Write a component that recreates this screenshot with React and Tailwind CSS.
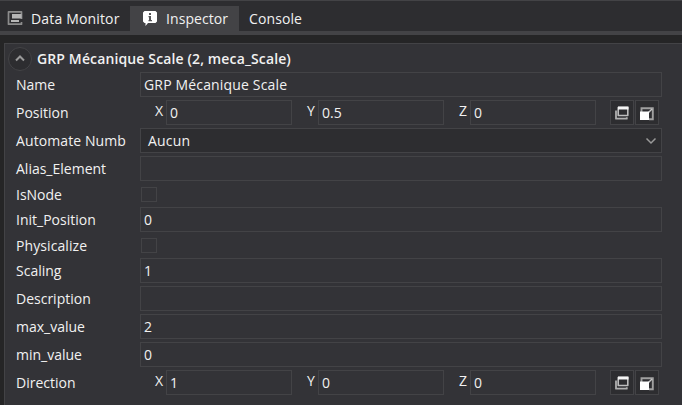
import React from "react";

const box = "h-[25px] border border-[#434346] bg-[#333337]";

function Field({ value }) {
  return (
    <div className={`${box} flex w-[522px] items-center pl-[3px]`}>
      <span className="tracking-[0.16px]">{value}</span>
    </div>
  );
}

function Axis({ name, value }) {
  return (
    <div className="ml-[15px] flex">
      <span className="w-[11px] leading-[22px]">{name}</span>
      <div className={`${box} flex w-[126px] items-center pl-[3px]`}>{value}</div>
    </div>
  );
}

function CopyIcon() {
  return (
    <svg width="16" height="16" viewBox="0 0 16 16" fill="none">
      <path d="M4.200 2.500h9.600v8H4.200z" stroke="#bdbdbd" strokeWidth="1.600" strokeLinejoin="round" />
      <path d="M4 1.500h10.500v3H4z" fill="#f5f5f5" />
      <path d="M2 5.500v8.200h10.800v-1.500" stroke="#b0b0b0" strokeWidth="1.800" strokeLinejoin="round" />
    </svg>
  );
}

function PasteIcon() {
  return (
    <svg width="16" height="16" viewBox="0 0 16 16" fill="none">
      <path d="M2.500 7V3.200h11.300v11H10" stroke="#a0a0a0" strokeWidth="1.900" />
      <path d="M9.500 7.500l3.500-3.500" stroke="#c8c8c8" strokeWidth="1.500" />
      <path d="M1 6.500h9V15H1z" fill="#ffffff" />
    </svg>
  );
}

function Vector({ values }) {
  return (
    <div className="flex">
      <Axis name="X" value={values[0]} />
      <Axis name="Y" value={values[1]} />
      <Axis name="Z" value={values[2]} />
      <div className="ml-[14px] flex gap-px">
        <button className="flex h-[25px] w-[24px] items-center justify-center border border-[#434346] bg-[#2d2d30]"><CopyIcon /></button>
        <button className="flex h-[25px] w-[24px] items-center justify-center border border-[#434346] bg-[#2d2d30] pt-px"><PasteIcon /></button>
      </div>
    </div>
  );
}

function Row({ label, tracking = "", short, children }) {
  return (
    <div className={`flex ${short ? "h-[23px]" : "h-[28px]"}`}>
      <div className={`w-[129px] shrink-0 overflow-hidden whitespace-nowrap pl-[11px] ${short ? "leading-[21px]" : "leading-[25px]"} ${tracking}`}>{label}</div>
      <div className="pl-[6px]">{children}</div>
    </div>
  );
}

function Check() {
  return <div className="ml-px mt-[3px] h-[15px] w-[16px] border border-[#434346]" />;
}

export default function App() {
  return (
    <div className="flex h-[405px] w-[682px] flex-col overflow-hidden bg-[#252526] font-['Open_Sans','Noto_Sans',sans-serif] text-[14px] text-[#f1f1f1]">
      <div className="flex h-[35px] shrink-0 items-start border-b-4 border-t border-[#434346] bg-[#2d2d30] leading-[25px]">
        <div className="mt-[5px] flex h-[25px] w-[130px] pl-[7px]">
          <svg className="mt-[4px]" width="16" height="16" viewBox="0 0 16 16" fill="none">
            <path d="M14.500 9V1.800h-13v12.400h13V12" stroke="#8c8c8c" strokeWidth="1.700" strokeLinejoin="round" />
            <path d="M5 4h9.500v4.500H5z" fill="#b4b4b4" />
            <path d="M4 11h8" stroke="#d0d0d0" strokeWidth="1.700" />
          </svg>
          <span className="ml-[8px] whitespace-nowrap tracking-[0.16px]">Data Monitor</span>
        </div>
        <div className="mt-[5px] flex h-[25px] w-[109px] bg-[#434346] pl-[12px]">
          <svg className="mt-[4px]" width="16" height="16" viewBox="0 0 16 16">
            <path d="M2.500 1h11L15 2.500v9L13.500 13H6l-2.500 3v-3h-1L1 11.500v-9z" fill="#ffffff" />
            <path d="M7 3h2v2H7zM6.500 6H9v4h1v1.300H6.500V10H7V7.300h-.5z" fill="#555557" />
          </svg>
          <span className="ml-[8px] tracking-[0.08px]">Inspector</span>
        </div>
        <span className="ml-[10px] mt-[5px] tracking-[0.1px]">Console</span>
      </div>

      <div className="ml-[4px] mt-[8px] flex grow flex-col border-l border-t border-[#434346] bg-[#333337]">
        <div className="flex h-[28px] items-center pl-[3px] pt-[1px]">
          <div className="flex h-[24px] w-[24px] items-center justify-center rounded-full border border-[#434346] bg-[#2d2d30]">
            <svg width="12" height="12" viewBox="0 0 12 12" fill="none">
              <path d="M2 7.500L6 3.500l4 4" stroke="#999999" strokeWidth="2" />
            </svg>
          </div>
          <span className="ml-[5px] font-semibold tracking-[0.13px]">GRP Mécanique Scale (2, meca_Scale)</span>
        </div>
        <Row label="Name"><Field value="GRP Mécanique Scale" /></Row>
        <Row label="Position"><Vector values={["0", "0.5", "0"]} /></Row>
        <Row label="Automate Numb" tracking="tracking-[0.1px]">
          <div className="flex h-[25px] w-[522px] items-center justify-between border border-[#434346] bg-[#2d2d30] pl-[7px] pr-[4px]">
            <span className="tracking-[0.2px]">Aucun</span>
            <svg width="12" height="12" viewBox="0 0 12 12" fill="none">
              <path d="M1.500 3.500L6 8l4.500-4.500" stroke="#999999" strokeWidth="1.500" />
            </svg>
          </div>
        </Row>
        <Row label="Alias_Element"><Field value="" /></Row>
        <Row label="IsNode" short><Check /></Row>
        <Row label="Init_Position"><Field value="0" /></Row>
        <Row label="Physicalize" tracking="tracking-[0.08px]" short><Check /></Row>
        <Row label="Scaling"><Field value="1" /></Row>
        <Row label="Description"><Field value="" /></Row>
        <Row label="max_value"><Field value="2" /></Row>
        <Row label="min_value"><Field value="0" /></Row>
        <Row label="Direction"><Vector values={["1", "0", "0"]} /></Row>
      </div>
    </div>
  );
}
